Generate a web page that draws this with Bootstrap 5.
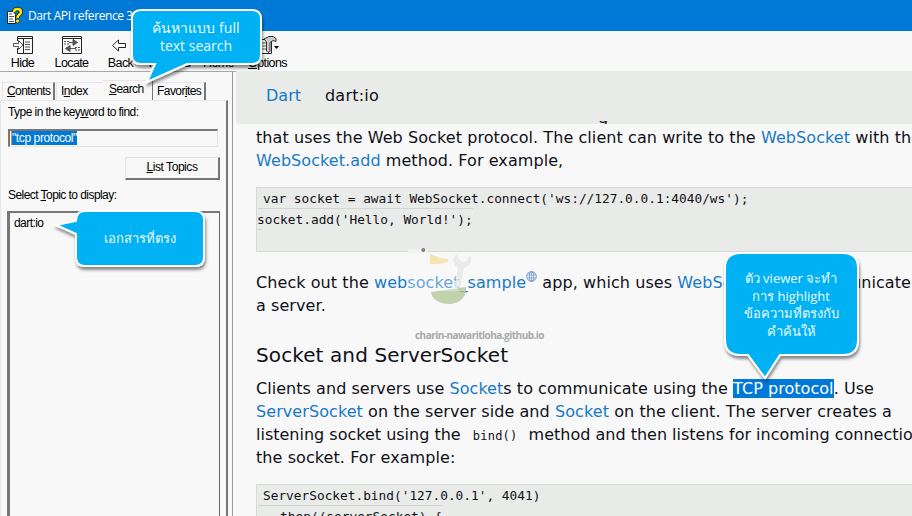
<!DOCTYPE html>
<html lang="en">
<head>
<meta charset="utf-8">
<title>Dart API reference</title>
<link href="https://cdn.jsdelivr.net/npm/bootstrap@5.3.0/dist/css/bootstrap.min.css" rel="stylesheet">
<style>
body{width:912px;height:516px;background:#f8f8f8;color:#101018;font-family:"DejaVu Sans",sans-serif;font-size:16px}
.titlebar{height:31px;background:#0079d6;color:#fff;font:12px "Open Sans",sans-serif;letter-spacing:-.4px;padding-left:6px;gap:5px}
.toolbar{height:40px;padding-top:3px;margin-left:-2px;font:12.5px/16px "Liberation Sans",sans-serif;letter-spacing:-.6px;color:#000}
.tool{width:49px}
.tool svg{height:22px;margin-bottom:-1px;margin-top:0;overflow:visible}
.ui{font:12px/15px "Liberation Sans",sans-serif;letter-spacing:-.56px;color:#000}
.side{width:236px;border-top:1px solid #a8a8a8}
.side-main{width:233px;border-right:1px solid #9a9a9a}
.tabs{height:28px;padding-left:2px}
.tabx{height:18px;border-top:1px solid #e6e6e6;border-left:1px solid #e6e6e6;padding:1px 0 0 4px}
.edge{border-right:2px solid #777}
.tab-on{height:20px;border-top:1px solid #e6e6e6;border-right:1px solid #777;padding:1px 0 0 7px}
.pane{width:228px;border-right:2px solid #777;border-left:1px solid #e6e6e6;border-top:1px solid #e6e6e6;padding:4px 6px 0 7px}
.inputx{height:18px;width:210px;border:1px solid #e4e4e4;border-top:2px solid #777;border-left:2px solid #777;padding:0 1px}
.sel{background:#0078d7;color:#fff}
.inputx .sel{letter-spacing:-.4px;height:14px;line-height:15px;border-left:1px solid #e08a50}
.btnx{width:95px;height:23px;border:1px solid #e2e2e2;border-right:2px solid #777;border-bottom:2px solid #777;letter-spacing:-.45px;padding-top:2px}
.listx{width:213px;margin-left:-1px;border-left:3px solid #777;border-top:2px solid #777;border-right:1px solid #666;padding:3px 4px}
.crumbs{height:50px;background:#e9ebe8;padding-left:30px;gap:24px}
.peek{height:3px;background:#e9ebe8;border-bottom-left-radius:2px;padding-left:362px}
.blue{color:#1878c8}
.doc{letter-spacing:.075px;line-height:23px;padding:2px 0 0 20px}
.doc p,.doc h2{margin:0;white-space:nowrap}
.doc h2{font-size:20px;font-weight:400;line-height:26px;letter-spacing:.1px}
.codebox{height:65px;background:#e9ebe8;border:1px solid #d6d9d5;border-right:0;font:12.8px/21px "DejaVu Sans Mono",monospace;letter-spacing:0;white-space:pre;color:#101018}
.codeline{height:21px}
.rule{height:1px;margin-top:-1px;background:#d3d6d2}
.inlinecode{font:12px/20px "DejaVu Sans Mono",monospace;letter-spacing:.25px;padding:0 11px 0 12px}
.callout-text{font:14px/17.5px "Open Sans",sans-serif;color:#e9f9ff;text-align:center;white-space:nowrap}
.overlay{left:0;top:0;pointer-events:none}
.c1{left:132px;top:19px;width:128px}
.c2{left:77px;top:230px;width:126px;font-size:13px}
.c3{left:725px;top:270px;width:132px;font-size:13px;line-height:17.6px}
.mark-text{left:415px;top:328px;font:bold 10px/14px "Open Sans",sans-serif;letter-spacing:-.52px;color:#a9a9a9;white-space:nowrap}
</style>
</head>
<body class="overflow-hidden position-relative">
<div class="d-flex flex-column h-100 overflow-hidden">
<header class="titlebar d-flex align-items-center flex-shrink-0">
<svg width="17" height="18" viewBox="0 0 17 18"><path d="M1.500 4.500h6l2 3v9h-8z" fill="#fff" stroke="#222"/><path d="M3 7h3M3 9.500h5M3 12h4M3 14.500h5" stroke="#557"/><path d="M8 5c0-4 7-4 7 0 0 2.500-3.500 2.500-3.500 6" fill="none" stroke="#222" stroke-width="4.200"/><path d="M8 5c0-4 7-4 7 0 0 2.500-3.500 2.500-3.500 6" fill="none" stroke="#ffe900" stroke-width="2.500"/><circle cx="11.500" cy="14" r="2" fill="#ffe900" stroke="#222" stroke-width=".7"/></svg>
<span>Dart API reference 3.5.0</span>
</header>
<nav class="toolbar d-flex flex-shrink-0 text-center">
<div class="tool d-flex flex-column align-items-center"><svg width="22" viewBox="0 -1 22 22" fill="none" stroke="#222"><path d="M5.500 6V1.500h15v17h-15V13M11.500 4v15M5.500 3.500h15"/><path d="M13 7h5M13 9.500h5M13 12h5M13 14.500h5" stroke="#555"/><path d="M1.500 8.500h5V5.500l4.500 4.500-4.500 4.500v-3h-5z" fill="#fff" stroke="#555"/></svg>Hide</div>
<div class="tool d-flex flex-column align-items-center"><svg width="22" viewBox="0 -1 22 22" fill="none" stroke="#222"><path d="M1.500 1.500h19v17h-19zM1 3.500h20"/><path d="M3 6.500h6M3 9h5M14 12.500h5M14 15h5" stroke="#555" stroke-dasharray="2 1"/><path d="M8 7.500h5M12 4.500l4.500 3-4.500 3zM15 13.500H8M9 10.500l-4.500 3 4.500 3z" fill="#555" stroke="#555"/></svg>Locate</div>
<div class="tool d-flex flex-column align-items-center"><svg width="22" viewBox="0 -1 22 22"><path d="M2.500 10.500l6-5.500v3.500h7v4h-7v3.500z" fill="#fff" stroke="#222"/></svg>Back</div>
<div class="tool d-flex flex-column align-items-center"><svg width="22" viewBox="0 -1 22 22"><path d="M18.500 10.500l-6-5v3h-7v4h7v3z" fill="#fff" stroke="#888"/></svg>Forward</div>
<div class="tool d-flex flex-column align-items-center"><svg width="22" viewBox="0 -1 22 22"><path d="M2 10l9-8 9 8M5 9v9h12V9" fill="none" stroke="#222"/></svg>Home</div>
<div class="tool d-flex flex-column align-items-center"><svg width="22" viewBox="0 -1 22 22"><path d="M3.500 4.500h11v14h-11z" fill="#fff" stroke="#222"/><path d="M5 8h4M5 11h4M5 14h4" stroke="#555"/><path d="M7 4l5-2.500h4l3 2v3l-3-1-3 2v9l-2 1-1.500-1.500V7z" fill="#ccc" stroke="#333"/><path d="M17 11h5l-2.500 3z"/></svg><span><u>O</u>ptions</span></div>
</nav>
<main class="d-flex flex-grow-1">
<aside class="side ui flex-shrink-0 d-flex"><div class="side-main d-flex flex-column">
<div class="tabs d-flex align-items-end flex-shrink-0 text-nowrap">
<div class="tabx edge" style="width:53px"><u>C</u>ontents</div>
<div class="tabx" style="width:47px;margin-left:1px">I<u>n</u>dex</div>
<div class="tab-on align-self-end" style="width:50px;padding-left:6px"><u>S</u>earch</div>
<div class="tabx edge border-start-0" style="width:53px">Favor<u>i</u>tes</div>
</div>
<div class="pane flex-grow-1 d-flex flex-column">
<div>Type in the key<u>w</u>ord to find:</div>
<div class="inputx d-flex" style="margin-top:9px"><span class="sel">"tcp protocol"</span></div>
<div class="btnx align-self-end text-center flex-shrink-0" style="margin-top:10px"><u>L</u>ist Topics</div>
<div style="margin-top:8px">Select <u>T</u>opic to display:</div>
<div class="listx flex-grow-1" style="margin-top:8px">dart:io</div>
</div>
</div></aside>
<section class="flex-grow-1 overflow-hidden">
<div class="crumbs d-flex align-items-center"><span class="blue">Dart</span><span style="letter-spacing:.22px">dart:io</span></div>
<div class="peek d-flex align-items-end overflow-hidden"><span style="line-height:19px;margin-bottom:-3px">g</span></div>
<div class="doc">
<p>that uses the Web Socket protocol. The client can write to the <span class="blue">WebSocket</span> with the</p>
<p><span class="blue">WebSocket.add</span> method. For example,</p>
<div class="codebox" style="margin:15px 0 19px"><div class="codeline" style="padding-left:6px">var socket = await WebSocket.connect('ws://127.0.0.1:4040/ws');</div><div class="rule" style="width:215px;margin-left:1px"></div><div class="codeline">socket.add('Hello, World!');</div><div class="rule" style="width:5px"></div></div>
<p>Check out the <span class="blue">websocket_sample</span><svg width="11" height="11" viewBox="0 0 11 11" fill="none" stroke="#6d97cf" style="margin:-14px 0 0 0"><circle cx="5.500" cy="5.500" r="4.800"/><ellipse cx="5.500" cy="5.500" rx="2.200" ry="4.800"/><path d="M1 4h9M1 7h9M5.500 1v9" stroke-width=".7"/></svg> app, which uses <span class="blue">WebSocket</span> <span class="ms-2">to communicate with</span></p>
<p>a server.</p>
<h2 style="margin:25px 0 9px">Socket and ServerSocket</h2>
<p style="letter-spacing:.045px">Clients and servers use <span class="blue">Socket</span>s to communicate using the <span class="sel">TCP protocol</span>. Use</p>
<p><span class="blue">ServerSocket</span> on the server side and <span class="blue">Socket</span> on the client. The server creates a</p>
<p style="letter-spacing:0">listening socket using the<span class="inlinecode">bind()</span>method and then listens for incoming connections on</p>
<p>the socket. For example:</p>
<div class="codebox" style="margin-top:15px"><div class="codeline" style="padding-left:6px">ServerSocket.bind('127.0.0.1', 4041)</div><div class="rule" style="width:184px;margin-left:1px"></div><div class="codeline">  .then((serverSocket) {</div></div>
</div>
</section>
</main>
</div>

<svg class="overlay position-absolute" width="912" height="516" viewBox="0 0 912 516">
<defs><filter id="shade" x="-20%" y="-20%" width="140%" height="150%"><feDropShadow dx="1" dy="3" stdDeviation="1.500" flood-color="#000" flood-opacity=".45"/></filter></defs>
<rect x="408" y="249" width="20" height="4" fill="#f2f3f1"/>
<circle cx="423.300" cy="250" r="2" fill="#808080"/>
<g opacity=".8"><path d="M430 254l10 4 8 1v3l-9 2h-9z" fill="#f7e0a0"/>
<path d="M457 254c-7 4-3 12 1 14l-4 20h6l4-20c6-2 10-9 5-13l-2 6-5 1-3-3z" fill="#e6e9e8"/>
<path d="M431 292l35-5c1 11-8 17-17 17s-17-4-18-12z" fill="#b5c99a"/></g>
<path d="M407 275h51v16h-51z" fill="#f8f8f8" opacity=".35"/>
<g fill="#04b1f4" stroke="#fff" stroke-width="2" filter="url(#shade)">
<path d="M141 10h111q9 0 9 9v36q0 9-9 9h-65l-40 18 8-18h-14q-9 0-9-9V19q0-9 9-9z"/>
<path d="M85 211h110q9 0 9 9v37q0 9-9 9H85q-9 0-9-9V234l-20-9 20-4q0-10 9-10z"/>
<path d="M741 253h102q15 0 15 15v72q0 15-15 15h-63l-15 23-17-23h-7q-16 0-16-15v-72q0-15 16-15z"/>
</g>
</svg>
<div class="mark-text position-absolute">charin-nawaritloha.github.io</div>
<div class="callout-text c1 position-absolute">ค้นหาแบบ full<br>text search</div>
<div class="callout-text c2 position-absolute">เอกสารที่ตรง</div>
<div class="callout-text c3 position-absolute">ตัว viewer จะทำ<br>การ highlight<br>ข้อความที่ตรงกับ<br>คำค้นให้</div>
<script src="https://cdn.jsdelivr.net/npm/bootstrap@5.3.0/dist/js/bootstrap.bundle.min.js"></script>
</body>
</html>
